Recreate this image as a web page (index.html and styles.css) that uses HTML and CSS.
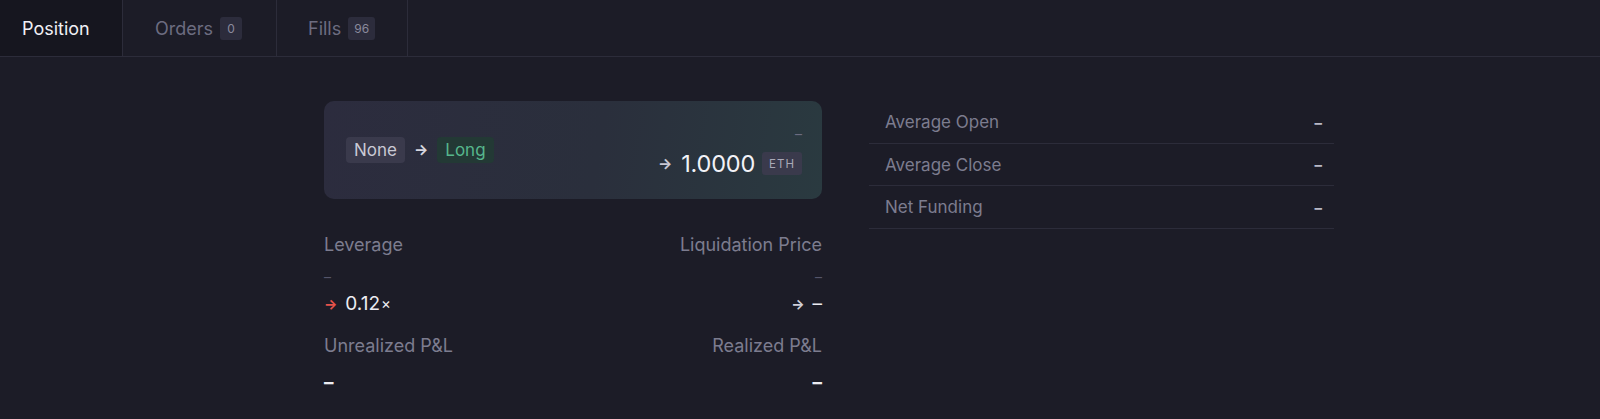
FILE: index.html
```html
<!DOCTYPE html>
<html>
<head>
<meta charset="utf-8">
<link rel="stylesheet" href="styles.css">
</head>
<body>
<div class="tabs">
  <div class="tab active">Position</div>
  <div class="tab">Orders <span class="count">0</span></div>
  <div class="tab">Fills <span class="count">96</span></div>
</div>
<div class="content">
  <div class="left">
    <div class="card">
      <div class="sides">
        <span class="pill none">None</span>
        <span class="arrow">→</span>
        <span class="pill long">Long</span>
      </div>
      <div class="size">
        <div class="size-old">–</div>
        <div class="size-new"><span class="arrow">→</span><span class="num">1.0000</span><span class="asset">ETH</span></div>
      </div>
    </div>
    <div class="stats">
      <div class="stat">
        <div class="label">Leverage</div>
        <div class="old">–</div>
        <div class="val"><span class="arrow red">→</span>0.12<span class="x">×</span></div>
      </div>
      <div class="stat right">
        <div class="label">Liquidation Price</div>
        <div class="old">–</div>
        <div class="val"><span class="arrow">→</span>–</div>
      </div>
      <div class="stat">
        <div class="label">Unrealized P&amp;L</div>
        <div class="val dash">–</div>
      </div>
      <div class="stat right">
        <div class="label">Realized P&amp;L</div>
        <div class="val dash">–</div>
      </div>
    </div>
  </div>
  <div class="details">
    <div class="row"><span>Average Open</span><span class="v">–</span></div>
    <div class="row"><span>Average Close</span><span class="v">–</span></div>
    <div class="row"><span>Net Funding</span><span class="v">–</span></div>
  </div>
</div>
</body>
</html>
```

FILE: styles.css
```css
* { box-sizing: border-box; }
html, body {
  margin: 0;
  background: #1c1c27;
  font-family: Inter, "Noto Sans", sans-serif;
  color: #e6e6ee;
  height: 419px;
  overflow: hidden;
}
.tabs {
  display: flex;
  height: 57px;
  border-bottom: 1px solid #2c2c3a;
}
.tab {
  display: flex;
  align-items: center;
  gap: 7px;
  padding: 0 0 0 32px;
  font-size: 18px;
  color: #6c6c80;
  border-right: 1px solid #2c2c3a;
}
.tab:nth-child(1) { width: 123px; padding-left: 22px; }
.tab:nth-child(2) { width: 154px; }
.tab:nth-child(3) { width: 131px; padding-left: 31px; }
.tab.active {
  background: #16161f;
  color: #f0f0f5;
}
.count {
  display: inline-flex;
  align-items: center;
  justify-content: center;
  height: 23px;
  min-width: 22px;
  padding: 0 6px;
  border-radius: 3px;
  background: #2c2c3c;
  color: #8a8a9c;
  font-size: 12px;
}
.content {
  display: flex;
  gap: 47px;
  padding: 44px 0 0 324px;
}
.left { width: 498px; }
.card {
  height: 98px;
  border-radius: 10px;
  background: linear-gradient(100deg, #2c2c3e 0%, #2a2f3c 55%, #2a3a40 100%);
  display: flex;
  align-items: center;
  justify-content: space-between;
  padding: 0 20px 0 22px;
}
.sides { display: flex; align-items: center; margin-top: -1px; }
.pill {
  display: inline-flex;
  align-items: center;
  height: 26px;
  padding: 0 8px;
  border-radius: 4px;
  font-size: 17px;
}
.pill.none { background: #3a3a4c; color: #c9c9d4; }
.pill.long { background: #233935; color: #56b68c; }
.sides .arrow { margin: 0 9px 0 9px; color: #d6d6df; font-size: 15px; font-weight: 700; }
.size { display: flex; flex-direction: column; align-items: flex-end; margin-top: 5px; }
.size-old { color: #6c6c80; font-size: 14px; height: 22px; line-height: 14px; }
.size-new { display: flex; align-items: center; }
.size-new .arrow { color: #c8c8d4; font-size: 15px; margin-right: 9px; font-weight: 700; }
.size-new .num { font-size: 23.5px; color: #f2f2f7; letter-spacing: -0.2px; }
.asset {
  margin-left: 7px;
  height: 23px;
  display: inline-flex;
  align-items: center;
  padding: 0 7px;
  border-radius: 3px;
  background: #3a3a4c;
  color: #a9a9b8;
  font-size: 11.5px;
  letter-spacing: 1px;
}
.stats {
  display: grid;
  grid-template-columns: 1fr 1fr;
  row-gap: 17px;
  margin-top: 34px;
}
.stat { display: flex; flex-direction: column; }
.stat.right { align-items: flex-end; }
.label { font-size: 18px; color: #7c7c8f; line-height: 24px; }
.old { font-size: 14px; color: #55556a; line-height: 18px; margin-top: 11px; }
.val { font-size: 19px; color: #ececf2; line-height: 26px; display: flex; align-items: center; margin-top: 5px; }
.val .x { font-size: 15px; margin-left: 1px; }
.val .arrow { font-size: 14px; margin-right: 8px; color: #d0d0da; font-weight: 700; }
.val .arrow.red { color: #e5534b; }
.val.dash { margin-top: 12px; font-weight: 700; }
.details { width: 465px; }
.row {
  height: 42.5px;
  display: flex;
  align-items: center;
  justify-content: space-between;
  padding: 1px 12px 0 16px;
  border-bottom: 1px solid #2c2c3a;
  font-size: 17px;
  color: #7c7c8f;
}
.row .v { color: #b8b8c6; font-weight: 700; font-size: 15px; }
```
